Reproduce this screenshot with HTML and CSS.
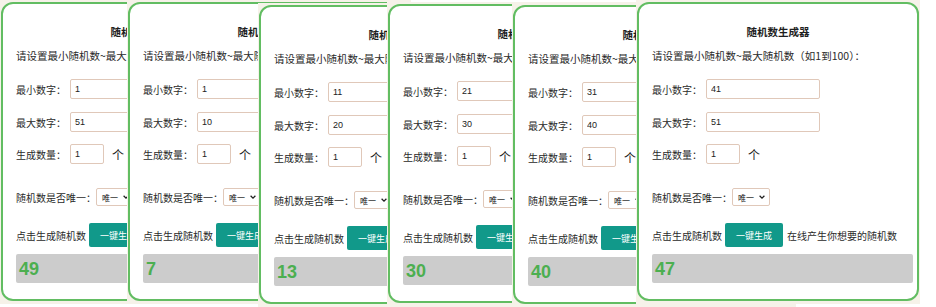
FILE: index.html
```html
<!DOCTYPE html>
<html lang="zh-CN">
<head>
    <meta charset="UTF-8">
    <title>随机数生成器</title>
    <link rel="stylesheet" href="styles.css">
</head>
<body>
    <div class="board">
        <div class="shot shot-1">
            <div class="panel">
                <div class="title">随机数生成器</div>
                <p class="intro">请设置最小随机数~最大随机数（如1到100）：</p>
                <div class="row"><span class="label">最小数字：</span><input class="num wide" value="1"></div>
                <div class="row row-2"><span class="label">最大数字：</span><input class="num wide" value="51"></div>
                <div class="row row-3"><span class="label">生成数量：</span><input class="num small" value="1"><span class="unit">个</span></div>
                <div class="row row-sel"><span>随机数是否唯一：</span><div class="select">唯一<svg viewBox="0 0 10 10" width="8" height="8"><path d="M2 3.5 5 6.5 8 3.5" fill="none" stroke="#222" stroke-width="1.6"/></svg></div></div>
                <div class="row row-btn"><span>点击生成随机数</span><button class="go">一键生成</button><span class="tip">在线产生你想要的随机数</span></div>
                <div class="result">49</div>
            </div>
        </div>

        <div class="shot shot-2">
            <div class="panel">
                <div class="title">随机数生成器</div>
                <p class="intro">请设置最小随机数~最大随机数（如1到100）：</p>
                <div class="row"><span class="label">最小数字：</span><input class="num wide" value="1"></div>
                <div class="row row-2"><span class="label">最大数字：</span><input class="num wide" value="10"></div>
                <div class="row row-3"><span class="label">生成数量：</span><input class="num small" value="1"><span class="unit">个</span></div>
                <div class="row row-sel"><span>随机数是否唯一：</span><div class="select">唯一<svg viewBox="0 0 10 10" width="8" height="8"><path d="M2 3.5 5 6.5 8 3.5" fill="none" stroke="#222" stroke-width="1.6"/></svg></div></div>
                <div class="row row-btn"><span>点击生成随机数</span><button class="go">一键生成</button><span class="tip">在线产生你想要的随机数</span></div>
                <div class="result">7</div>
            </div>
        </div>

        <div class="shot shot-3">
            <div class="panel">
                <div class="title">随机数生成器</div>
                <p class="intro">请设置最小随机数~最大随机数（如1到100）：</p>
                <div class="row"><span class="label">最小数字：</span><input class="num wide" value="11"></div>
                <div class="row row-2"><span class="label">最大数字：</span><input class="num wide" value="20"></div>
                <div class="row row-3"><span class="label">生成数量：</span><input class="num small" value="1"><span class="unit">个</span></div>
                <div class="row row-sel"><span>随机数是否唯一：</span><div class="select">唯一<svg viewBox="0 0 10 10" width="8" height="8"><path d="M2 3.5 5 6.5 8 3.5" fill="none" stroke="#222" stroke-width="1.6"/></svg></div></div>
                <div class="row row-btn"><span>点击生成随机数</span><button class="go">一键生成</button><span class="tip">在线产生你想要的随机数</span></div>
                <div class="result">13</div>
            </div>
        </div>

        <div class="shot shot-4">
            <div class="panel">
                <div class="title">随机数生成器</div>
                <p class="intro">请设置最小随机数~最大随机数（如1到100）：</p>
                <div class="row"><span class="label">最小数字：</span><input class="num wide" value="21"></div>
                <div class="row row-2"><span class="label">最大数字：</span><input class="num wide" value="30"></div>
                <div class="row row-3"><span class="label">生成数量：</span><input class="num small" value="1"><span class="unit">个</span></div>
                <div class="row row-sel"><span>随机数是否唯一：</span><div class="select">唯一<svg viewBox="0 0 10 10" width="8" height="8"><path d="M2 3.5 5 6.5 8 3.5" fill="none" stroke="#222" stroke-width="1.6"/></svg></div></div>
                <div class="row row-btn"><span>点击生成随机数</span><button class="go">一键生成</button><span class="tip">在线产生你想要的随机数</span></div>
                <div class="result">30</div>
            </div>
        </div>

        <div class="shot shot-5">
            <div class="panel">
                <div class="title">随机数生成器</div>
                <p class="intro">请设置最小随机数~最大随机数（如1到100）：</p>
                <div class="row"><span class="label">最小数字：</span><input class="num wide" value="31"></div>
                <div class="row row-2"><span class="label">最大数字：</span><input class="num wide" value="40"></div>
                <div class="row row-3"><span class="label">生成数量：</span><input class="num small" value="1"><span class="unit">个</span></div>
                <div class="row row-sel"><span>随机数是否唯一：</span><div class="select">唯一<svg viewBox="0 0 10 10" width="8" height="8"><path d="M2 3.5 5 6.5 8 3.5" fill="none" stroke="#222" stroke-width="1.6"/></svg></div></div>
                <div class="row row-btn"><span>点击生成随机数</span><button class="go">一键生成</button><span class="tip">在线产生你想要的随机数</span></div>
                <div class="result">40</div>
            </div>
        </div>

        <div class="shot shot-6">
            <div class="panel">
                <div class="title">随机数生成器</div>
                <p class="intro">请设置最小随机数~最大随机数（如1到100）：</p>
                <div class="row"><span class="label">最小数字：</span><input class="num wide" value="41"></div>
                <div class="row row-2"><span class="label">最大数字：</span><input class="num wide" value="51"></div>
                <div class="row row-3"><span class="label">生成数量：</span><input class="num small" value="1"><span class="unit">个</span></div>
                <div class="row row-sel"><span>随机数是否唯一：</span><div class="select">唯一<svg viewBox="0 0 10 10" width="8" height="8"><path d="M2 3.5 5 6.5 8 3.5" fill="none" stroke="#222" stroke-width="1.6"/></svg></div></div>
                <div class="row row-btn"><span>点击生成随机数</span><button class="go">一键生成</button><span class="tip">在线产生你想要的随机数</span></div>
                <div class="result">47</div>
            </div>
        </div>
    </div>
</body>
</html>
```

FILE: styles.css
```css
body {
    margin: 0;
    background-color: #fff;
    font-family: "Noto Sans CJK SC", "Liberation Sans", sans-serif;
    color: #2a2a2a;
}
.board {
    position: relative;
    width: 936px;
    height: 307px;
    overflow: hidden;
}

/* each screenshot sits on the board like a window */
.shot {
    position: absolute;
    padding: 2px 1px 3px 1px;
    background-color: #f6f2e9;
}
.shot-1 { left: 0; top: 0; }
.shot-2 { left: 127px; top: 0; }
.shot-3 { left: 258px; top: 3px; }
.shot-4 { left: 387px; top: 2px; }
.shot-5 { left: 512px; top: 3px; }
.shot-6 { left: 636px; top: 0; }

.panel {
    width: 282px;
    height: 299px;
    box-sizing: border-box;
    padding: 19px 0 0 13px;
    overflow: hidden;
    background-color: #fff;
    border: 2px solid #62bd62;
    border-radius: 12px;
    font-size: 10px;
}
.title {
    height: 18px;
    line-height: 18px;
    margin-right: 13px;
    text-align: center;
    font-size: 10.5px;
    font-weight: bold;
    color: #1e1e1e;
}
.intro {
    margin: 8px 0 0;
    line-height: 14px;
    font-size: 10.5px;
    white-space: nowrap;
}
.row {
    display: flex;
    align-items: center;
    height: 20px;
    margin-top: 16px;
    white-space: nowrap;
}
.row-2 { margin-top: 13px; }
.row-3 { margin-top: 12px; }
.label {
    width: 54px;
}
.num {
    box-sizing: border-box;
    height: 20px;
    padding: 0 4px;
    border: 1px solid #e0c8b9;
    border-radius: 2px;
    font-family: "Liberation Sans", sans-serif;
    font-size: 9px;
    color: #222;
    outline: none;
}
.wide { width: 114px; }
.small { width: 34px; }
.unit {
    margin-left: 8px;
    font-size: 12px;
    color: #222;
}
.row-sel {
    height: 18px;
    margin-top: 24px;
}
.select {
    display: flex;
    align-items: center;
    gap: 4px;
    box-sizing: border-box;
    width: 38px;
    height: 18px;
    padding: 0 3px 0 5px;
    border: 1px solid #e0c8b9;
    border-radius: 2px;
    font-size: 8px;
    color: #111;
}
.row-btn {
    height: 24px;
    margin-top: 17px;
}
.go {
    flex-shrink: 0;
    width: 58px;
    height: 24px;
    margin: 0 4px 0 3px;
    padding: 0;
    border: none;
    border-radius: 2px;
    background-color: #11998a;
    color: #fff;
    font-family: "Noto Sans CJK SC", sans-serif;
    font-size: 9px;
}
.result {
    box-sizing: border-box;
    width: 261px;
    height: 29px;
    margin-top: 7px;
    padding-left: 3px;
    border-radius: 2px;
    background-color: #cccccc;
    color: #4caf50;
    font-family: "Liberation Sans", sans-serif;
    font-size: 18px;
    font-weight: bold;
    line-height: 31px;
}
```
